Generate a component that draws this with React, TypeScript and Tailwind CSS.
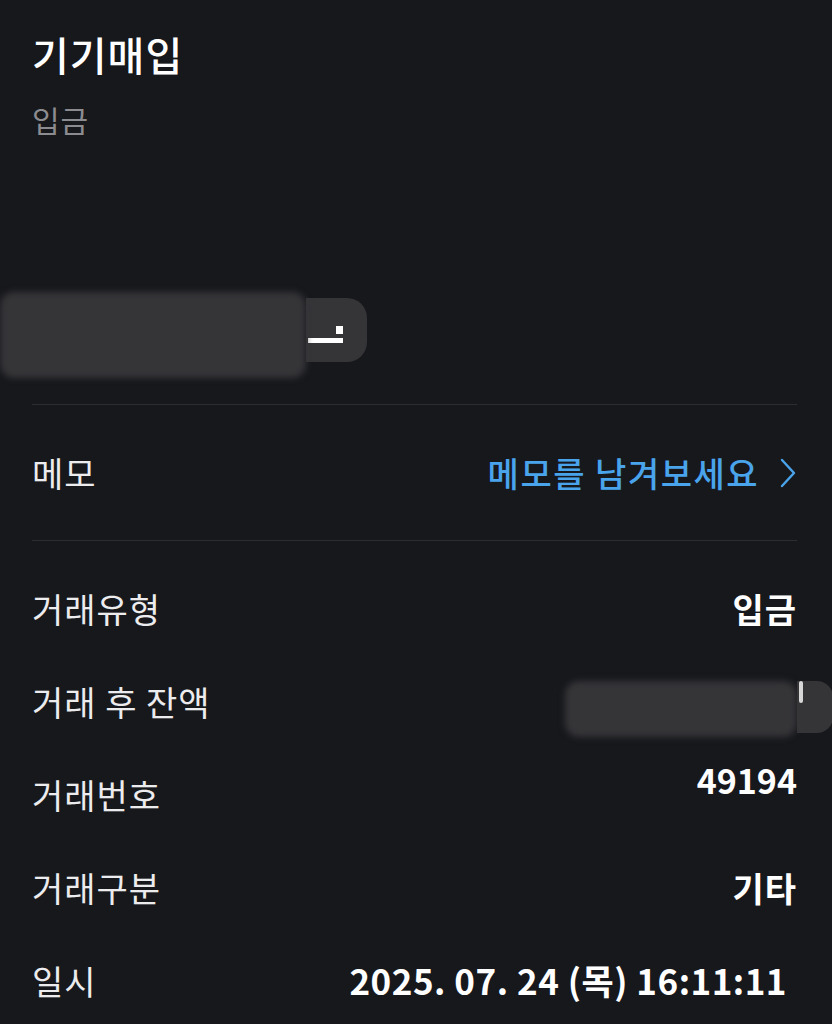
import React from 'react';

const font = { fontFamily: '"Noto Sans CJK KR", "Noto Sans", sans-serif' };

type Row = { label: string; value?: React.ReactNode };

function Masked({ className }: { className: string }) {
  // smudged amount, as in the screenshot
  return <div className={`flex-none bg-[#353538] blur-[3px] rounded-[14px] ${className}`} />;
}

function DetailRow({ label, value }: Row) {
  return (
    <div className="h-[93px] flex items-center justify-between">
      <span className="text-[34px] text-[#ececee] tracking-[1px]">{label}</span>
      {value}
    </div>
  );
}

export default function App() {
  const rows: Row[] = [
    { label: '거래유형', value: <span className="text-[34px] font-semibold text-white tracking-[1px]">입금</span> },
    {
      label: '거래 후 잔액',
      value: (
        <div className="flex items-start -mr-[36px] mt-[10px]">
          <Masked className="w-[232px] h-[56px] mt-[4px]" />
          <div className="flex-none h-[52px] mt-[4px] pl-[2px] pr-[30px] bg-[#353538] rounded-r-[16px] blur-[0.5px]">
            <div className="w-[4px] h-[22px] bg-white/80 rounded-sm" />
          </div>
        </div>
      ),
    },
    { label: '거래번호', value: <span className="text-[34px] font-semibold text-white mb-[30px]">49194</span> },
    { label: '거래구분', value: <span className="text-[34px] font-semibold text-white tracking-[1px]">기타</span> },
    {
      label: '일시',
      value: (
        <span className="text-[35px] font-semibold text-white mr-[10px] tracking-[0.5px]">
          2025. 07. 24 (목) 16:11:11
        </span>
      ),
    },
  ];

  return (
    <div className="min-h-screen w-full bg-[#17181c] overflow-hidden" style={font}>
      <div className="pl-[32px] pr-[35px]">
        {/* Header */}
        <div className="pt-[26px]">
          <h1 className="text-[40px] font-medium text-white leading-[56px] tracking-[1px]">기기매입</h1>
          <p className="mt-[16px] text-[30px] text-[#8c8c90] leading-[42px] tracking-[1px]">입금</p>
        </div>

        {/* Amount (masked) */}
        <div className="h-[264px] flex items-end pb-[26px]">
          <div className="flex items-center -ml-[32px]">
            <Masked className="w-[306px] h-[86px]" />
            <div className="flex-none flex flex-col items-start h-[64px] pl-[2px] pr-[24px] pt-[14px] bg-[#353538] rounded-r-[20px] -mt-[10px]">
              <div className="w-[35px] h-[22px] flex justify-end items-end">
                <div className="w-[7px] h-[8px] bg-white" />
              </div>
              <div className="mt-[4px] w-[35px] h-[5px] bg-white" />
            </div>
          </div>
        </div>

        <div className="h-px bg-[#2c2d32]" />

        {/* Memo */}
        <div className="h-[135px] flex items-center justify-between">
          <span className="text-[34px] text-[#ececee] tracking-[1px]">메모</span>
          <button className="flex items-center gap-[20px] text-[#4aa4ec]">
            <span className="text-[34px] font-medium tracking-[1.5px]">메모를 남겨보세요</span>
            <svg width="18" height="32" viewBox="0 0 18 32" fill="none">
              <polyline points="3,3 15,16 3,29" stroke="#4aa4ec" strokeWidth="2.4" strokeLinecap="round" strokeLinejoin="round" />
            </svg>
          </button>
        </div>

        <div className="h-px bg-[#2c2d32]" />

        {/* Details */}
        <div className="pt-[21px]">
          {rows.map((r) => (
            <DetailRow key={r.label} label={r.label} value={r.value} />
          ))}
        </div>
      </div>
    </div>
  );
}
